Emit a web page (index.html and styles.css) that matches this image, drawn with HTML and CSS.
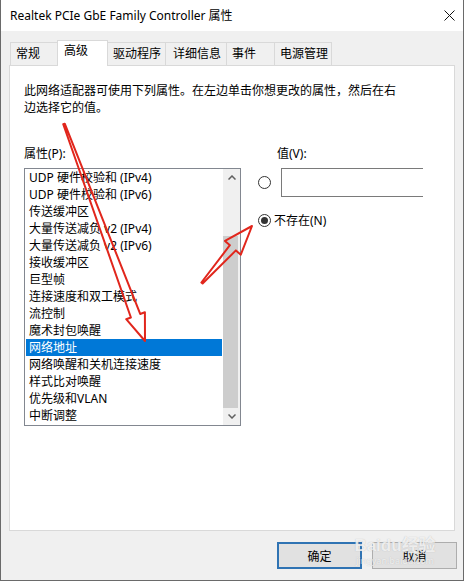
FILE: index.html
```html
<!DOCTYPE html>
<html lang="zh-CN">
<head>
    <meta charset="UTF-8">
    <title>Realtek PCIe GbE Family Controller 属性</title>
    <link rel="stylesheet" href="styles.css">
</head>
<body>

<div class="window">
    <div class="titlebar">
        <span class="title">Realtek PCIe GbE Family Controller 属性</span>
        <svg class="close" width="11" height="11" viewBox="0 0 11 11">
            <path d="M0.5 0.5 L10.5 10.5 M10.5 0.5 L0.5 10.5" stroke="#111" stroke-width="1" fill="none"/>
        </svg>
    </div>

    <div class="client">
        <div class="tabs">
            <div class="tab tab-general">常规</div>
            <div class="tab tab-advanced active">高级</div>
            <div class="tab tab-driver">驱动程序</div>
            <div class="tab tab-details">详细信息</div>
            <div class="tab tab-events">事件</div>
            <div class="tab tab-power">电源管理</div>
        </div>

        <div class="panel">
            <p class="desc">此网络适配器可使用下列属性。在左边单击你想更改的属性，然后在右边选择它的值。</p>

            <div class="props">
                <div class="col-left">
                    <div class="label">属性(P):</div>
                    <div class="listbox">
                        <ul class="items">
                            <li>UDP 硬件校验和 (IPv4)</li>
                            <li>UDP 硬件校验和 (IPv6)</li>
                            <li>传送缓冲区</li>
                            <li>大量传送减负 v2 (IPv4)</li>
                            <li>大量传送减负 v2 (IPv6)</li>
                            <li>接收缓冲区</li>
                            <li>巨型帧</li>
                            <li>连接速度和双工模式</li>
                            <li>流控制</li>
                            <li>魔术封包唤醒</li>
                            <li class="selected">网络地址</li>
                            <li>网络唤醒和关机连接速度</li>
                            <li>样式比对唤醒</li>
                            <li>优先级和VLAN</li>
                            <li>中断调整</li>
                        </ul>
                        <div class="scrollbar">
                            <div class="sb-btn">
                                <svg width="8" height="5" viewBox="0 0 8 5"><polyline points="0.5,4.5 4,1 7.5,4.5" stroke="#606060" stroke-width="1.5" fill="none"/></svg>
                            </div>
                            <div class="sb-track">
                                <div class="sb-thumb"></div>
                            </div>
                            <div class="sb-btn">
                                <svg width="8" height="5" viewBox="0 0 8 5"><polyline points="0.5,0.5 4,4 7.5,0.5" stroke="#606060" stroke-width="1.5" fill="none"/></svg>
                            </div>
                        </div>
                    </div>
                </div>

                <div class="col-right">
                    <div class="label value-label">值(V):</div>
                    <div class="option option-value">
                        <span class="radio"></span>
                        <div class="textbox"></div>
                    </div>
                    <div class="option option-none">
                        <span class="radio checked"></span>
                        <span>不存在(N)</span>
                    </div>
                </div>
            </div>
        </div>

        <div class="buttons">
            <button class="btn btn-default">确定</button>
            <button class="btn">取消</button>
        </div>
    </div>
</div>

<!-- 红色标注箭头 -->
<svg class="arrows" width="465" height="581" viewBox="0 0 465 581">
    <polygon points="64.75,123.72 140.2,313.95 144.9,312.2 145,341 126.2,319.2 130.9,317.5 63.25,124.28"/>
    <polygon points="201.4,282.5 229.9,245.2 225,240.9 252,226 240.8,254.7 235.9,250.4 202.6,283.5"/>
</svg>

<div class="watermark">
    <div class="wm-logo">Bai<span>du</span>经验</div>
    <div class="wm-url">jingyan.baidu.com</div>
</div>

</body>
</html>
```

FILE: styles.css
```css
body {
    margin: 0;
    background: #fff;
    font-family: "Noto Sans", "Noto Sans CJK SC", sans-serif;
    font-size: 12px;
    color: #000;
    position: relative;
}

.window {
    width: 464px;
    height: 581px;
    box-sizing: border-box;
    border: 1px solid #6a6a6a;
    border-top: none;
    background: #f0f0f0;
}

.titlebar {
    height: 31px;
    background: #fff;
    display: flex;
    align-items: center;
    justify-content: space-between;
    padding: 0 8px 0 9px;
}
.title {
    font-size: 12px;
    line-height: 17px;
    margin-top: -1px;
}

.client {
    padding: 9px 0 0 8px;
}

/* tabs */
.tabs {
    display: flex;
    align-items: flex-end;
    height: 25px;
    margin-left: 1px;
}
.tab {
    box-sizing: border-box;
    height: 23px;
    line-height: 22px;
    border: 1px solid #d9d9d9;
    border-bottom: none;
    margin-right: -1px;
    padding-left: 5px;
    background: #f0f0f0;
    white-space: nowrap;
}
.tab.active {
    height: 26px;
    line-height: 20px;
    margin-bottom: -1px;
    padding-left: 6px;
    background: #fff;
    position: relative;
    z-index: 1;
}
.tab-general { width: 48px; }
.tab-advanced { width: 51px; }
.tab-driver { width: 59px; }
.tab-details { width: 62px; padding-left: 7px; }
.tab-events { width: 49px; }
.tab-power { width: 58px; }

/* panel */
.panel {
    width: 446px;
    height: 466px;
    box-sizing: border-box;
    border: 1px solid #d9d9d9;
    background: #fff;
    padding: 16px 14px 0 14px;
}
.desc {
    margin: 0;
    width: 380px;
    line-height: 17px;
}

.props {
    display: grid;
    grid-template-columns: 217px 1fr;
    column-gap: 17px;
    margin-top: 29px;
}
.label {
    line-height: 17px;
    margin-bottom: 6px;
}

.listbox {
    height: 258px;
    box-sizing: border-box;
    border: 1px solid #828790;
    display: flex;
}
.items {
    flex: 1;
    list-style: none;
    margin: 0;
    padding: 0 1px;
}
.items li {
    height: 17px;
    line-height: 17px;
    padding-left: 3px;
    white-space: nowrap;
}
.items li.selected {
    background: #0078d7;
    color: #fff;
}

.scrollbar {
    width: 17px;
    background: #f0f0f0;
    display: flex;
    flex-direction: column;
}
.sb-btn {
    height: 17px;
    display: flex;
    align-items: center;
    justify-content: center;
}
.sb-track {
    flex: 1;
    display: flex;
    flex-direction: column;
}
.sb-thumb {
    margin: 50px 2px 0 0;
    flex: 1;
    background: #cdcdcd;
}

/* right column */
.value-label {
    padding-left: 19px;
}
.option {
    display: flex;
    align-items: center;
}
.option-value {
    height: 29px;
}
.option-none {
    margin-top: 15px;
    line-height: 17px;
}
.radio {
    width: 13px;
    height: 13px;
    box-sizing: border-box;
    border: 1px solid #333;
    border-radius: 50%;
    background: #fff;
    flex-shrink: 0;
    display: flex;
    align-items: center;
    justify-content: center;
}
.radio.checked::after {
    content: "";
    width: 7px;
    height: 7px;
    border-radius: 50%;
    background: #333;
}
.option-value .radio {
    margin-right: 10px;
}
.option-none .radio {
    margin-right: 3px;
}
.textbox {
    width: 142px;
    height: 29px;
    box-sizing: border-box;
    border: 1px solid #7a7a7a;
    border-right: none;
}

/* bottom buttons */
.buttons {
    display: flex;
    justify-content: flex-end;
    gap: 10px;
    margin-top: 11px;
    padding-right: 6px;
}
.btn {
    width: 85px;
    height: 27px;
    box-sizing: border-box;
    background: #e1e1e1;
    border: 1px solid #adadad;
    font-family: "Noto Sans", "Noto Sans CJK SC", sans-serif;
    font-size: 12px;
    padding: 0;
    color: #000;
}
.btn-default {
    border: 2px solid #2f73b3;
}

/* overlays */
.arrows {
    position: absolute;
    top: 0;
    left: 0;
    pointer-events: none;
}
.arrows polygon {
    fill: none;
    stroke: #e1261c;
    stroke-width: 2;
    stroke-linejoin: round;
}

.watermark {
    position: absolute;
    left: 350px;
    top: 536px;
    width: 90px;
    text-align: center;
    color: rgba(255, 255, 255, 0.75);
    text-shadow: 0 0 1px rgba(150, 150, 150, 0.6);
    pointer-events: none;
}
.wm-logo {
    font-family: "Liberation Sans", "Noto Sans CJK SC", sans-serif;
    font-size: 17px;
    font-weight: bold;
    line-height: 20px;
}
.wm-url {
    font-size: 9px;
    line-height: 10px;
}
```
